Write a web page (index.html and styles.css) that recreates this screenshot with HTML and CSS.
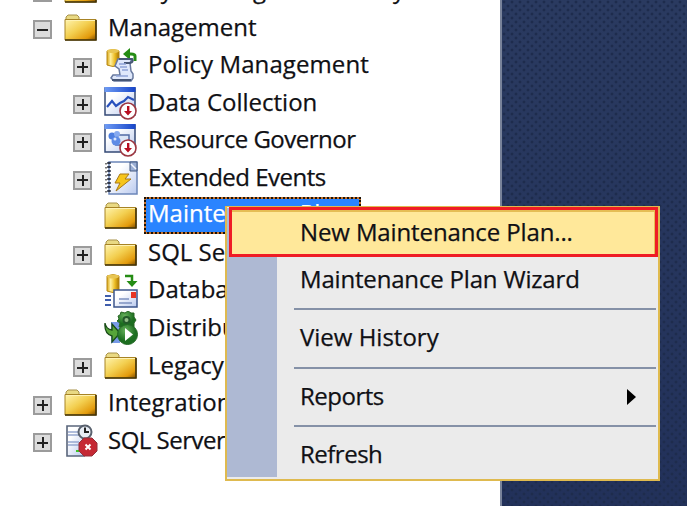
FILE: index.html
```
<!DOCTYPE html>
<html lang="en">
<head>
<meta charset="utf-8">
<title>Object Explorer</title>
<link rel="stylesheet" href="styles.css">
</head>
<body>
<svg class="defs" width="0" height="0" aria-hidden="true">
  <defs>
    <linearGradient id="gold" x1="0" y1="0" x2="1" y2="1"><stop offset="0" stop-color="#fff5b0"/><stop offset=".45" stop-color="#f3cf50"/><stop offset=".8" stop-color="#e39b0c"/><stop offset="1" stop-color="#7a4a00"/></linearGradient>
    <linearGradient id="cyl" x1="0" x2="1"><stop offset="0" stop-color="#d9a514"/><stop offset=".3" stop-color="#fff0a0"/><stop offset=".65" stop-color="#edbd24"/><stop offset="1" stop-color="#a87500"/></linearGradient>
    <linearGradient id="bar" x1="0" x2="1"><stop offset="0" stop-color="#6f9cf5"/><stop offset="1" stop-color="#1745c8"/></linearGradient>
    <linearGradient id="paper" x1="0" y1="0" x2="1" y2="1"><stop offset=".3" stop-color="#fff"/><stop offset="1" stop-color="#b9c9ee"/></linearGradient>
    <radialGradient id="green" cx=".4" cy=".3"><stop offset="0" stop-color="#65b05a"/><stop offset="1" stop-color="#1c6e20"/></radialGradient>
    <symbol id="folder" viewBox="0 0 34 34">
      <path d="M2 10V6l2-2h9l2 2v4z" fill="#e9d983" stroke="#a8924a"/>
      <path d="M1 8.500h31v20.500H1z" fill="url(#gold)" stroke="#a78325"/>
      <path d="M2 9.500h29" stroke="#fff3b4"/>
      <path d="M1 29h31V9" fill="none" stroke="#403006" stroke-width="1.600"/>
    </symbol>
    <symbol id="down" viewBox="0 0 18 18">
      <circle cx="9" cy="9" r="8" fill="#fff" stroke="#9c3640" stroke-width="1.600"/>
      <path d="M8 4h2.400v5H13l-4 4.500L5 9h3z" fill="#b80d20"/>
    </symbol>
    <symbol id="policy" viewBox="0 0 34 34">
      <path d="M3 3q6-3 12 0v14q-6 3-12 0z" fill="url(#cyl)" stroke="#b88916"/>
      <ellipse cx="9" cy="3" rx="6" ry="2" fill="#e8c552"/>
      <path d="M31 13V8q0-2-4-2h-4" fill="none" stroke="#258c14" stroke-width="3"/>
      <path d="M19 6l7-6v12z" fill="#258c14"/>
      <path d="M14 11h14l-2 4 1 8 2 3v4l-2 3H10l-3-3 2-3h7l-1-6-4-3z" fill="#dfe8fb" stroke="#68799f" stroke-width="1.500"/>
      <path d="M15 11h13q2 3-2 4h-6M8 32h19" fill="none" stroke="#465675" stroke-width="2"/>
      <path d="M15 16h7M16 19h7M18 22h6M12 28h12" stroke="#8ea3d7" stroke-width="1.500"/>
    </symbol>
    <symbol id="collect" viewBox="0 0 34 34">
      <path d="M1 2h30v27H1z" fill="url(#paper)" stroke="#354a76" stroke-width="1.500"/>
      <path d="M.5 1h31v5H.5z" fill="url(#bar)"/>
      <path d="M3 21l5-6 4 5 4-3 4-2 4-4 6 3" fill="none" stroke="#2851bd" stroke-width="2.200"/>
      <use href="#down" x="15" y="16" width="18" height="18"/>
    </symbol>
    <symbol id="governor" viewBox="0 0 34 34">
      <path d="M1 2h30v27H1z" fill="url(#paper)" stroke="#354a76" stroke-width="1.500"/>
      <path d="M.5 1h31v5H.5z" fill="url(#bar)"/>
      <path d="M14 12h11v10H12z" fill="#dce6f7" stroke="#526ba5" stroke-width="1.500"/>
      <circle cx="8" cy="13" r="3.500" fill="#4d7ee0"/><circle cx="13" cy="11" r="3" fill="#86aaf0"/><circle cx="12" cy="18" r="4.500" fill="#5d8be6"/><circle cx="11" cy="16" r="1.500" fill="#d8e6ff"/>
      <use href="#down" x="15" y="16" width="18" height="18"/>
    </symbol>
    <symbol id="events" viewBox="0 0 34 34">
      <path d="M5 1h28v32H5z" fill="url(#paper)" stroke="#6c86b9" stroke-width="1.500"/>
      <path d="M26 1v9h7V1z" fill="#9aaed5" stroke="#40567f"/><path d="M27 3l5 5" stroke="#f1f5ff" stroke-width="1.500"/>
      <path d="M5 1v32" stroke="#31394b" stroke-width="3.500" stroke-dasharray="2 2"/>
      <path d="M2 2v31" stroke="#777" stroke-width="2" stroke-dasharray="1.500 2.500"/>
      <path d="M16 13h9l-4 5h6L12 30l4-8h-5z" fill="#f6c51c" stroke="#a87916"/>
    </symbol>
    <symbol id="mail" viewBox="0 0 34 34">
      <path d="M3 2q6-3 12 0v15q-6 3-12 0z" fill="url(#cyl)" stroke="#b88916"/>
      <ellipse cx="9" cy="2.500" rx="6" ry="2" fill="#e8c552"/>
      <path d="M21 2h7v6" fill="none" stroke="#258c14" stroke-width="2.500"/><path d="M22.500 7h11L28 13z" fill="#258c14"/>
      <path d="M10 16h23v17H10z" fill="url(#paper)" stroke="#3c568c" stroke-width="1.500"/>
      <path d="M27 18h5v6h-5z" fill="#e73524"/><path d="M15 25h10M15 29h13" stroke="#7d91c0" stroke-width="1.500"/>
      <path d="M1 22h6M1 26h6M1 31h6" stroke="#405eac" stroke-width="1.800"/>
    </symbol>
    <symbol id="distributed" viewBox="0 0 34 34">
      <path d="M7 11h9v21H7z" fill="#789be7"/>
      <path d="M14 5l2-1 1-3 4 1 3-2 3 2 3 0 0 4 2 3-2 3v4H15l1-4-3-2 2-2z" fill="url(#green)" stroke="#286723"/>
      <circle cx="22.500" cy="9" r="4" fill="#23592a"/><circle cx="22.500" cy="9" r="2" fill="#92bd88"/>
      <path d="M1 12q1 6 7 7v-6l8 9-8 9v-6Q0 23 1 12z" fill="#56a539" stroke="#194b18" stroke-width="1.300"/>
      <circle cx="23.500" cy="23.500" r="10" fill="url(#green)" stroke="#226824"/>
      <path d="M21 17l8 6.500-8 6.500z" fill="#fff"/>
    </symbol>
    <symbol id="agent" viewBox="0 0 34 34">
      <path d="M3 2h17v30H3z" fill="url(#paper)" stroke="#59657b" stroke-width="1.600"/>
      <path d="M4 8h14M4 11h14M4 18h11M4 21h11" stroke="#96a8cf" stroke-width="1.600"/>
      <path d="M12 27h3" stroke="#3fc428" stroke-width="2"/>
      <circle cx="21" cy="8" r="6.500" fill="#e8edf5" stroke="#59616e" stroke-width="2"/><path d="M21 3.500V8h4" fill="none" stroke="#222" stroke-width="2"/>
      <path d="M20 14h8l5 5v8l-5 5h-8l-5-5v-8z" fill="#c52934" stroke="#94303a"/>
      <path d="M21.500 20.500l5 5m0-5l-5 5" stroke="#fff" stroke-width="2"/>
    </symbol>
  </defs>
</svg>
<main class="window">
  <ul class="tree">
    <li class="row"><i class="toggle plus"></i><svg class="icon"><use href="#folder"/></svg><span class="label snug">Always On High Availability</span></li>
    <li class="row"><i class="toggle"></i><svg class="icon"><use href="#folder"/></svg><span class="label">Management</span></li>
    <li class="row child"><i class="toggle plus"></i><svg class="icon"><use href="#policy"/></svg><span class="label wide">Policy Management</span></li>
    <li class="row child"><i class="toggle plus"></i><svg class="icon"><use href="#collect"/></svg><span class="label">Data Collection</span></li>
    <li class="row child"><i class="toggle plus"></i><svg class="icon"><use href="#governor"/></svg><span class="label tight">Resource Governor</span></li>
    <li class="row child"><i class="toggle plus"></i><svg class="icon"><use href="#events"/></svg><span class="label tight">Extended Events</span></li>
    <li class="row child"><i class="toggle none"></i><svg class="icon"><use href="#folder"/></svg><span class="label selected">Maintenance Plans</span></li>
    <li class="row child"><i class="toggle plus"></i><svg class="icon"><use href="#folder"/></svg><span class="label">SQL Server Logs</span></li>
    <li class="row child"><i class="toggle none"></i><svg class="icon"><use href="#mail"/></svg><span class="label">Database Mail</span></li>
    <li class="row child"><i class="toggle none"></i><svg class="icon"><use href="#distributed"/></svg><span class="label">Distributed</span></li>
    <li class="row child"><i class="toggle plus"></i><svg class="icon"><use href="#folder"/></svg><span class="label">Legacy</span></li>
    <li class="row"><i class="toggle plus"></i><svg class="icon"><use href="#folder"/></svg><span class="label">Integration</span></li>
    <li class="row"><i class="toggle plus"></i><svg class="icon"><use href="#agent"/></svg><span class="label tight">SQL Server</span></li>
  </ul>
  <div class="backdrop"></div>
</main>
<nav class="menu">
  <div class="item active">New Maintenance Plan...</div>
  <div class="item wizard">Maintenance Plan Wizard</div>
  <hr>
  <div class="item">View History</div>
  <hr>
  <div class="item tight">Reports<svg class="arrow" viewBox="0 0 10 16"><path d="M1 0l9 8-9 8z"/></svg></div>
  <hr>
  <div class="item tight">Refresh</div>
</nav>
</body>
</html>
```
FILE: styles.css
```
* { box-sizing: border-box; }
body {
  margin: 0;
  height: 507px;
  overflow: hidden;
  position: relative;
  background: #fff;
  color: #101014;
  font: 24px/36px "Open Sans", "Noto Sans", sans-serif;
  -webkit-text-stroke: 0.250px;
}
.defs { position: absolute; }
.window { display: flex; width: 687px; height: 506px; overflow: hidden; }
.tree {
  width: 500px;
  margin: -28.500px 0 0;
  padding: 0;
  list-style: none;
  flex: none;
}
.row { display: flex; align-items: center; height: 37.550px; padding-left: 33px; }
.child { padding-left: 73px; }
.toggle {
  flex: none;
  width: 19px;
  height: 19px;
  margin: 4px 12px 0 0;
  border: 2px solid #9b9b9b;
  background: linear-gradient(#222, #222) center / 11px 2px no-repeat #dcdcdc;
}
.plus {
  background: linear-gradient(#222, #222) center / 11px 2px no-repeat,
    linear-gradient(#222, #222) center / 2px 11px no-repeat, #dcdcdc;
}
.none { visibility: hidden; }
.icon { flex: none; width: 34px; height: 34px; margin-right: 6px; }
.label { padding: 0 4px 2.500px; white-space: nowrap; }
.wide { letter-spacing: 0.100px; }
.snug { letter-spacing: -0.100px; }
.tight { letter-spacing: -0.500px; }
.selected {
  width: 217px;
  height: 37px;
  margin-top: -1px;
  padding: 0 2px;
  border: 2px dotted #1b1208;
  background: linear-gradient(#2a84ff, #2a84ff) padding-box, #c8722c;
  color: #fff;
  line-height: 27px;
}
.backdrop {
  flex: 1;
  border-left: 2px solid #79839a;
  background: radial-gradient(circle at 2px 2px, #1e2c4d 1px, transparent 1.800px) 0 0 / 8px 8px,
    radial-gradient(circle at 6px 6px, #1e2c4d 1px, transparent 1.800px) 0 0 / 8px 8px,
    linear-gradient(#2a3a60, #22315a);
}
.menu {
  position: absolute;
  left: 225px;
  top: 206px;
  width: 435px;
  height: 275px;
  padding: 1px 0 0;
  border: 2px solid #dfba4f;
  border-top-width: 1px;
  background: linear-gradient(#aeb9d3, #aeb9d3) 0 1px / 50px 269px no-repeat #ebebeb;
}
.item { display: flex; align-items: center; height: 44px; padding-left: 73px; white-space: nowrap; }
.wizard { margin-bottom: 7px; letter-spacing: -0.180px; }
.item + hr + .item { height: 56.500px; padding-bottom: 2px; }
.active {
  height: 50px;
  margin: -1px 0 0 2px;
  padding-left: 68px;
  border: 3px solid #ef1c25;
  background: #ffe89a;
  box-shadow: inset -1px 2px #e5bd55;
  letter-spacing: -0.120px;
}
hr { width: 362px; height: 2px; margin: 0 0 0 67px; border: 0; background: #8591a7; }
.arrow { width: 10px; height: 16px; margin: 2px 22px 0 auto; }
```
